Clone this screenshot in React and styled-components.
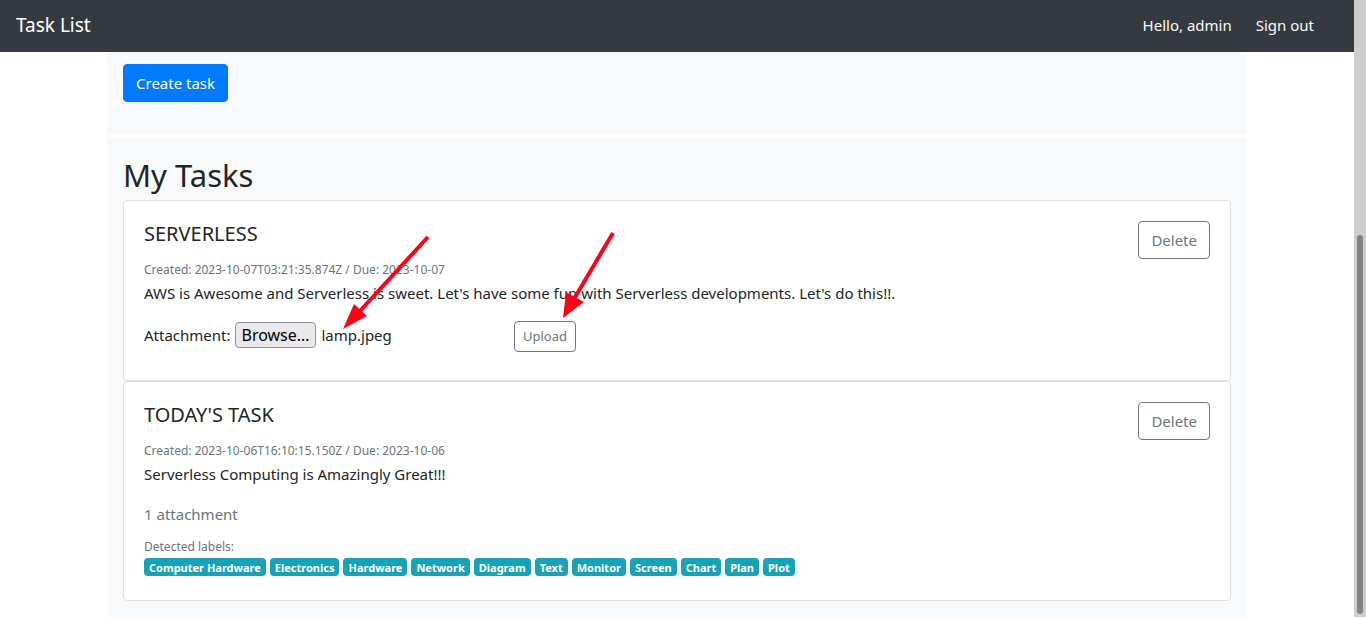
import React from "react";
import styled, { createGlobalStyle } from "styled-components";

const GlobalStyle = createGlobalStyle`
  *, *::before, *::after { box-sizing: border-box; }
  body {
    margin: 0;
    background: #fff;
    color: #212529;
    font-family: "Noto Sans", "Liberation Sans", sans-serif;
    font-size: 15px;
    line-height: 24px;
  }
  h2, h3, p, ul { margin: 0; padding: 0; font-weight: 400; }
`;

const Shell = styled.div`
  display: flex;
  min-height: 100vh;
`;

const Page = styled.div`
  flex: 1;
  min-width: 0;
  display: flex;
  flex-direction: column;
`;

const Navbar = styled.nav`
  display: flex;
  align-items: center;
  justify-content: space-between;
  padding: 10px 40px 12px 16px;
  background: #343a40;
`;

const Brand = styled.a`
  color: #fff;
  font-size: 19px;
  line-height: 30px;
  text-decoration: none;
`;

const NavItems = styled.div`
  display: flex;
  gap: 24px;
  color: #f8f9fa;
`;

const NavLink = styled.a`
  color: inherit;
  text-decoration: none;
`;

const Container = styled.main`
  flex: 1;
  display: flex;
  flex-direction: column;
  gap: 4px;
  width: 100%;
  max-width: 1140px;
  margin: 0 auto;
`;

const Panel = styled.section`
  padding: ${(p) => (p.$form ? "12px 16px 32px" : "18px 16px 16px")};
  flex-grow: ${(p) => (p.$form ? 0 : 1)};
  background: #f8f9fb;
`;

const Button = styled.button`
  display: block;
  flex-shrink: 0;
  padding: ${(p) => (p.$small ? "4px 8px" : "6px 12px")};
  border: 1px solid ${(p) => (p.$primary ? "#007bff" : "#6c757d")};
  border-radius: 4px;
  background: ${(p) => (p.$primary ? "#007bff" : "transparent")};
  color: ${(p) => (p.$primary ? "#fff" : "#6c757d")};
  font-family: inherit;
  font-size: ${(p) => (p.$small ? "13px" : "15px")};
  line-height: ${(p) => (p.$small ? "21px" : "24px")};
  cursor: pointer;
`;

const Heading = styled.h2`
  margin-bottom: 6px;
  font-size: 31px;
  line-height: 38px;
`;

const Card = styled.article`
  position: relative;
  display: flex;
  align-items: flex-start;
  justify-content: space-between;
  gap: 16px;
  padding: 20px;
  border: 1px solid #dfdfdf;
  border-radius: 4px;
  background: #fff;
`;

const CardBody = styled.div`
  min-width: 0;
`;

const Title = styled.h3`
  margin-bottom: 10px;
  font-size: 20px;
  line-height: 26px;
`;

const Meta = styled.p`
  padding-top: 2px;
  color: #6c757d;
  font-size: 12px;
  line-height: 22px;
`;

const Description = styled.p`
  margin-bottom: 16px;
`;

const AttachmentForm = styled.form`
  display: flex;
  align-items: flex-start;
  padding-bottom: 8px;
`;

const FilePicker = styled.div`
  display: flex;
  align-items: center;
  width: 370px;
  padding-top: 1px;
`;

const FileInput = styled.input`
  position: absolute;
  width: 1px;
  height: 1px;
  opacity: 0;
`;

const BrowseLabel = styled.label`
  margin: 0 5px 0 4px;
  padding: 0 6px;
  border: 1px solid #8f8f9d;
  border-radius: 4px;
  background: #e9e9ed;
  color: #000;
  font-size: 16px;
  cursor: pointer;
`;

const AttachmentCount = styled.p`
  margin-bottom: 8px;
  color: #6c757d;
`;

const Badges = styled.ul`
  display: flex;
  flex-wrap: wrap;
  gap: 4px;
  padding-bottom: 4px;
  list-style: none;
`;

const Badge = styled.li`
  padding: 4px 5px 2px;
  border-radius: 4px;
  background: #17a2b8;
  color: #fff;
  font-size: 11px;
  font-weight: 700;
  line-height: 12px;
`;

const Arrows = styled.svg`
  position: absolute;
  top: 0;
  left: 0;
  pointer-events: none;
`;

const ScrollTrack = styled.div`
  position: sticky;
  top: 0;
  display: flex;
  flex-direction: column;
  justify-content: flex-end;
  width: 12px;
  height: 100vh;
  padding: 3px;
  background: #cdcdcd;
`;

const ScrollThumb = styled.div`
  height: 62%;
  border-radius: 3px;
  background: #7f8382;
`;

const labels = [
  "Computer Hardware", "Electronics", "Hardware", "Network", "Diagram",
  "Text", "Monitor", "Screen", "Chart", "Plan", "Plot",
];

function Task({ title, created, due, description, children }) {
  return (
    <Card>
      <CardBody>
        <Title>{title}</Title>
        <Meta>Created: {created} / Due: {due}</Meta>
        <Description>{description}</Description>
        {children}
      </CardBody>
      <Button type="button">Delete</Button>
    </Card>
  );
}

export default function App() {
  return (
    <>
      <GlobalStyle />
      <Shell>
        <Page>
          <Navbar>
            <Brand href="#">Task List</Brand>
            <NavItems>
              <span>Hello, admin</span>
              <NavLink href="#">Sign out</NavLink>
            </NavItems>
          </Navbar>
          <Container>
            <Panel $form>
              <Button type="button" $primary>Create task</Button>
            </Panel>
            <Panel>
              <Heading>My Tasks</Heading>
              <Task
                title="SERVERLESS"
                created="2023-10-07T03:21:35.874Z"
                due="2023-10-07"
                description="AWS is Awesome and Serverless is sweet. Let's have some fun with Serverless developments. Let's do this!!."
              >
                <AttachmentForm>
                  <FilePicker>
                    <label htmlFor="attachment">Attachment:</label>
                    <FileInput id="attachment" type="file" />
                    <BrowseLabel htmlFor="attachment">Browse…</BrowseLabel>
                    <span>lamp.jpeg</span>
                  </FilePicker>
                  <Button type="button" $small>Upload</Button>
                </AttachmentForm>
                <Arrows width="500" height="130" viewBox="0 0 500 130" aria-hidden="true">
                  <g stroke="#ff0018" strokeWidth="4">
                    <path d="M304 36L236 110" />
                    <path d="M489 32L450 98" />
                  </g>
                  <g fill="#ff0018">
                    <path d="M219 128L230 103L243 115Z" />
                    <path d="M439 117L442 91L460 101Z" />
                  </g>
                </Arrows>
              </Task>
              <Task
                title="TODAY'S TASK"
                created="2023-10-06T16:10:15.150Z"
                due="2023-10-06"
                description="Serverless Computing is Amazingly Great!!!"
              >
                <AttachmentCount>1 attachment</AttachmentCount>
                <Meta>Detected labels:</Meta>
                <Badges>
                  {labels.map((label) => <Badge key={label}>{label}</Badge>)}
                </Badges>
              </Task>
            </Panel>
          </Container>
        </Page>
        <ScrollTrack aria-hidden="true">
          <ScrollThumb />
        </ScrollTrack>
      </Shell>
    </>
  );
}
